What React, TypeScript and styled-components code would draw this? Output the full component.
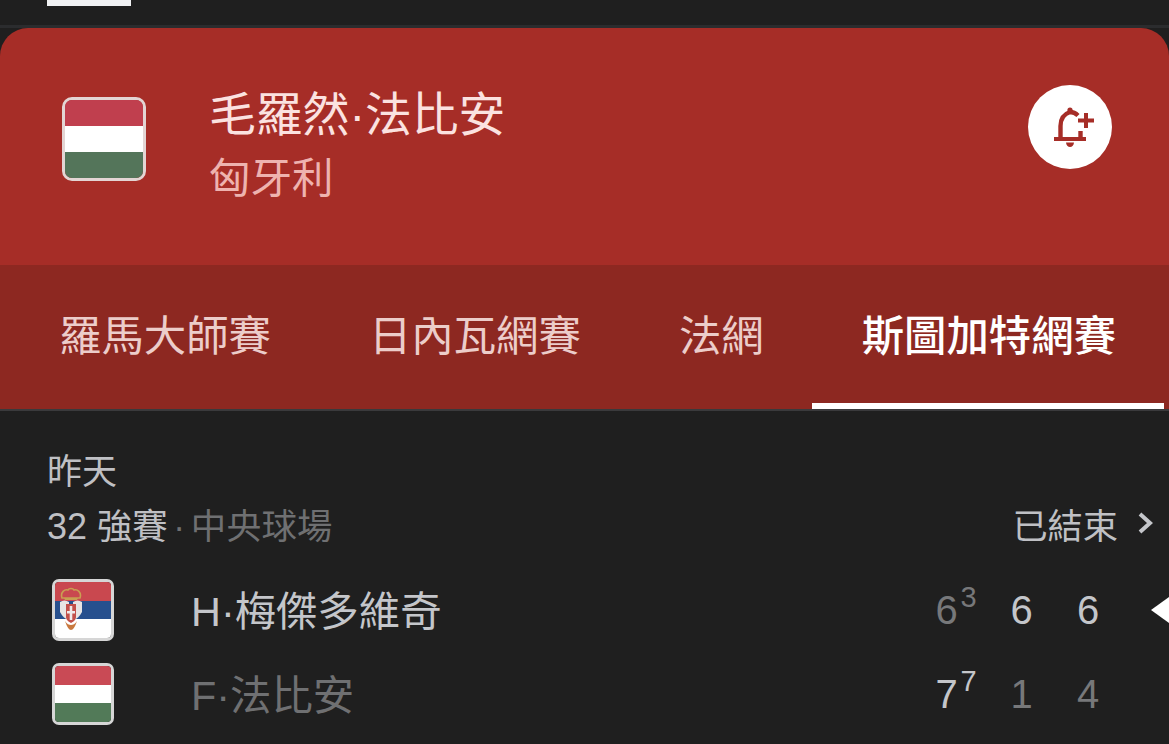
import React from 'react';
import styled, { createGlobalStyle } from 'styled-components';

const GlobalStyle = createGlobalStyle`
  html, body {
    margin: 0;
    height: 744px;
    overflow: hidden;
    background: #1f1f1f;
    font-family: "Liberation Sans", "Noto Sans CJK TC", sans-serif;
  }
`;

const tabs = ['羅馬大師賽', '日內瓦網賽', '法網', '斯圖加特網賽'];

const sets = [
  {
    name: 'H·梅傑多維奇',
    flag: 'serbia',
    winner: true,
    scores: [
      { value: '6', tie: '3', won: false },
      { value: '6', won: true },
      { value: '6', won: true },
    ],
  },
  {
    name: 'F·法比安',
    flag: 'hungary',
    winner: false,
    scores: [
      { value: '7', tie: '7', won: true },
      { value: '1', won: false },
      { value: '4', won: false },
    ],
  },
];

const SerbiaEmblem: React.FC = () => (
  <EmblemSvg viewBox="0 0 22 43">
    <path d="M2 11 C0 5 5 2 8 3 C9 1 13 1 14 3 C17 2 22 5 20 11 Z" fill="none" stroke="#c99f52" strokeWidth="1.6" />
    <path d="M4 11 H18 L17 13 H5 Z" fill="#c99f52" />
    <path d="M0 15 C3 13 6 13 9 15 L9 33 C5 32 2 29 0 25 Z" fill="#e8e5e4" />
    <path d="M22 15 C19 13 16 13 13 15 L13 33 C17 32 20 29 22 25 Z" fill="#e8e5e4" />
    <path d="M6 17 H16 V30 C16 33 13 35 11 36 C9 35 6 33 6 30 Z" fill="#c2504a" />
    <path d="M9.7 19 H12.3 V24 H15 V26.5 H12.3 V33 H9.7 V26.5 H7 V24 H9.7 Z" fill="#efeaea" />
    <path d="M5 34 C7 40 9 43 11 43 C13 43 15 40 17 34 C15 37 13 38 11 38 C9 38 7 37 5 34 Z" fill="#c9793f" />
  </EmblemSvg>
);

const BellPlus: React.FC = () => (
  <svg width="84" height="84" viewBox="0 0 84 84" fill="none" stroke="#a62d27">
    <path d="M26 54 H58" strokeWidth="4" />
    <path d="M32.5 54 V41 C32.5 33 36 29 42 27 C45 27 47.5 28 50 30.5" strokeWidth="4.4" />
    <path d="M52.5 46 V54" strokeWidth="4.4" />
    <circle cx="42" cy="25" r="2.6" fill="#a62d27" stroke="none" />
    <path d="M38 57.5 H46 C46 60 44 62 42 62 C40 62 38 60 38 57.5 Z" fill="#a62d27" stroke="none" />
    <path d="M50 35.5 H66 M58 28 V43" strokeWidth="4" />
  </svg>
);

const App: React.FC = () => (
  <React.Fragment>
    <GlobalStyle />
    <Page>
      <TopBar>
        <TopTab />
      </TopBar>
      <Card>
        <Header>
          <HeaderFlag $size={84} $dim>
            <i />
            <i />
            <i />
          </HeaderFlag>
          <PlayerInfo>
            <PlayerName>毛羅然·法比安</PlayerName>
            <Country>匈牙利</Country>
          </PlayerInfo>
          <BellButton>
            <BellPlus />
          </BellButton>
        </Header>
        <TabBar>
          {tabs.map((tab, index) => (
            <Tab key={tab} $active={index === tabs.length - 1}>
              {tab}
            </Tab>
          ))}
        </TabBar>
      </Card>
      <Match>
        <DateLabel>昨天</DateLabel>
        <MetaRow>
          <Round>
            <RoundNo>32</RoundNo> 強賽
            <Court>
              <Dot>·</Dot>中央球場
            </Court>
          </Round>
          <Status>
            已結束
            <svg width="16" height="24" viewBox="0 0 16 24" fill="none">
              <path d="M2 3 L12 12 L2 21" stroke="#c4c6ca" strokeWidth="4" />
            </svg>
          </Status>
        </MetaRow>
        {sets.map((row) => (
          <PlayerRow key={row.name}>
            {row.flag === 'serbia' ? (
              <SerbiaFlag>
                <i />
                <i />
                <i />
                <SerbiaEmblem />
              </SerbiaFlag>
            ) : (
              <HungaryFlag $size={62}>
                <i />
                <i />
                <i />
              </HungaryFlag>
            )}
            <RowName $winner={row.winner}>{row.name}</RowName>
            <Scores>
              {row.scores.map((score, index) => (
                <Score key={index} $won={score.won}>
                  {score.value}
                  {score.tie && <Tie>{score.tie}</Tie>}
                </Score>
              ))}
            </Scores>
            <ServeMark $show={row.winner} />
          </PlayerRow>
        ))}
      </Match>
    </Page>
  </React.Fragment>
);

const Page = styled.div`
  width: 1169px;
  height: 744px;
  overflow: hidden;
  display: flex;
  flex-direction: column;
  background: #1f1f1f;
`;

const TopBar = styled.div`
  height: 25px;
  padding-left: 47px;
  border-bottom: 3px solid #2b2c2e;
`;

const TopTab = styled.div`
  width: 84px;
  height: 6px;
  background: #f0f1f3;
`;

const Card = styled.div`
  display: flex;
  flex-direction: column;
  border-bottom: 2px solid #3a3a3c;
`;

const Header = styled.div`
  height: 237px;
  box-sizing: border-box;
  padding: 57px 57px 0 62px;
  display: flex;
  align-items: flex-start;
  background: #a62d27;
  border-radius: 28px 28px 0 0;
`;

const Flag = styled.div`
  position: relative;
  flex: none;
  box-sizing: border-box;
  overflow: hidden;
  display: flex;
  flex-direction: column;
  i {
    flex: 1;
    display: block;
  }
`;

const HungaryFlag = styled(Flag)<{ $size: number; $dim?: boolean }>`
  width: ${(p) => p.$size}px;
  height: ${(p) => p.$size}px;
  border: 3px solid ${(p) => (p.$dim ? '#e3d5d4' : '#d6d6d6')};
  border-radius: ${(p) => (p.$dim ? 10 : 7)}px;
  i:nth-child(1) {
    background: ${(p) => (p.$dim ? '#c03f4e' : '#c94a55')};
  }
  i:nth-child(2) {
    background: #fff;
  }
  i:nth-child(3) {
    background: ${(p) => (p.$dim ? '#54755a' : '#527a58')};
  }
`;

const HeaderFlag = styled(HungaryFlag)`
  margin-top: 12px;
`;

const SerbiaFlag = styled(Flag)`
  width: 62px;
  height: 62px;
  border: 3px solid #d6d6d6;
  border-radius: 7px;
  i:nth-child(1) {
    background: #c9484f;
  }
  i:nth-child(2) {
    background: #27508e;
  }
  i:nth-child(3) {
    background: #fff;
  }
`;

const EmblemSvg = styled.svg`
  position: absolute;
  left: 5px;
  top: 5px;
  width: 22px;
  height: 43px;
`;

const PlayerInfo = styled.div`
  margin-left: 63px;
  display: flex;
  flex-direction: column;
`;

const PlayerName = styled.div`
  font-size: 46.8px;
  line-height: 60px;
  color: #fbe2e0;
`;

const Country = styled.div`
  margin-top: 4px;
  font-size: 41.5px;
  line-height: 60px;
  color: #eeb3af;
`;

const BellButton = styled.div`
  margin-left: auto;
  width: 84px;
  height: 84px;
  border-radius: 50%;
  background: #fff;
`;

const TabBar = styled.div`
  height: 144px;
  padding-left: 9px;
  display: flex;
  background: #8d2821;
`;

const Tab = styled.div<{ $active?: boolean }>`
  box-sizing: border-box;
  padding: 0 48px 4px 50px;
  display: flex;
  align-items: center;
  font-size: 42.4px;
  color: ${(p) => (p.$active ? '#ffffff' : '#eccdca')};
  font-weight: ${(p) => (p.$active ? 500 : 400)};
  border-bottom: 6px solid ${(p) => (p.$active ? '#ffffff' : 'transparent')};
`;

const Match = styled.div`
  flex: 1;
  padding-top: 39px;
  display: flex;
  flex-direction: column;
`;

const DateLabel = styled.div`
  padding-left: 47px;
  font-size: 35px;
  line-height: 44px;
  color: #bfc0c4;
`;

const MetaRow = styled.div`
  margin: 7px 0 23px;
  padding: 0 15px 0 47px;
  display: flex;
  justify-content: space-between;
  align-items: center;
  height: 44px;
`;

const Round = styled.div`
  font-size: 35.4px;
  color: #bfc0c4;
`;

const RoundNo = styled.span`
  font-size: 36px;
`;

const Court = styled.span`
  color: #6f7072;
`;

const Dot = styled.span`
  margin: 0 5.7px;
`;

const Status = styled.div`
  display: flex;
  align-items: center;
  gap: 20px;
  font-size: 35.2px;
  color: #bfc0c4;
`;

const PlayerRow = styled.div`
  height: 84px;
  padding-left: 52px;
  display: flex;
  align-items: center;
`;

const RowName = styled.div<{ $winner: boolean }>`
  margin-left: 77px;
  padding-bottom: 4px;
  font-size: 41.4px;
  color: ${(p) => (p.$winner ? '#c4c6ca' : '#6f7072')};
`;

const Scores = styled.div`
  margin-left: auto;
  display: flex;
  font-size: 40px;
`;

const Score = styled.div<{ $won: boolean }>`
  position: relative;
  width: 66.5px;
  padding-left: 11px;
  box-sizing: border-box;
  color: ${(p) => (p.$won ? '#c4c6ca' : '#77787a')};
  &:first-child {
    width: 75px;
  }
`;

const Tie = styled.span`
  position: absolute;
  left: 36px;
  top: -7px;
  font-size: 29px;
`;

const ServeMark = styled.div<{ $show: boolean }>`
  width: 0;
  height: 0;
  margin-left: 18.5px;
  border-top: 13px solid transparent;
  border-bottom: 13px solid transparent;
  border-right: 18px solid ${(p) => (p.$show ? '#ffffff' : 'transparent')};
`;

export default App;
